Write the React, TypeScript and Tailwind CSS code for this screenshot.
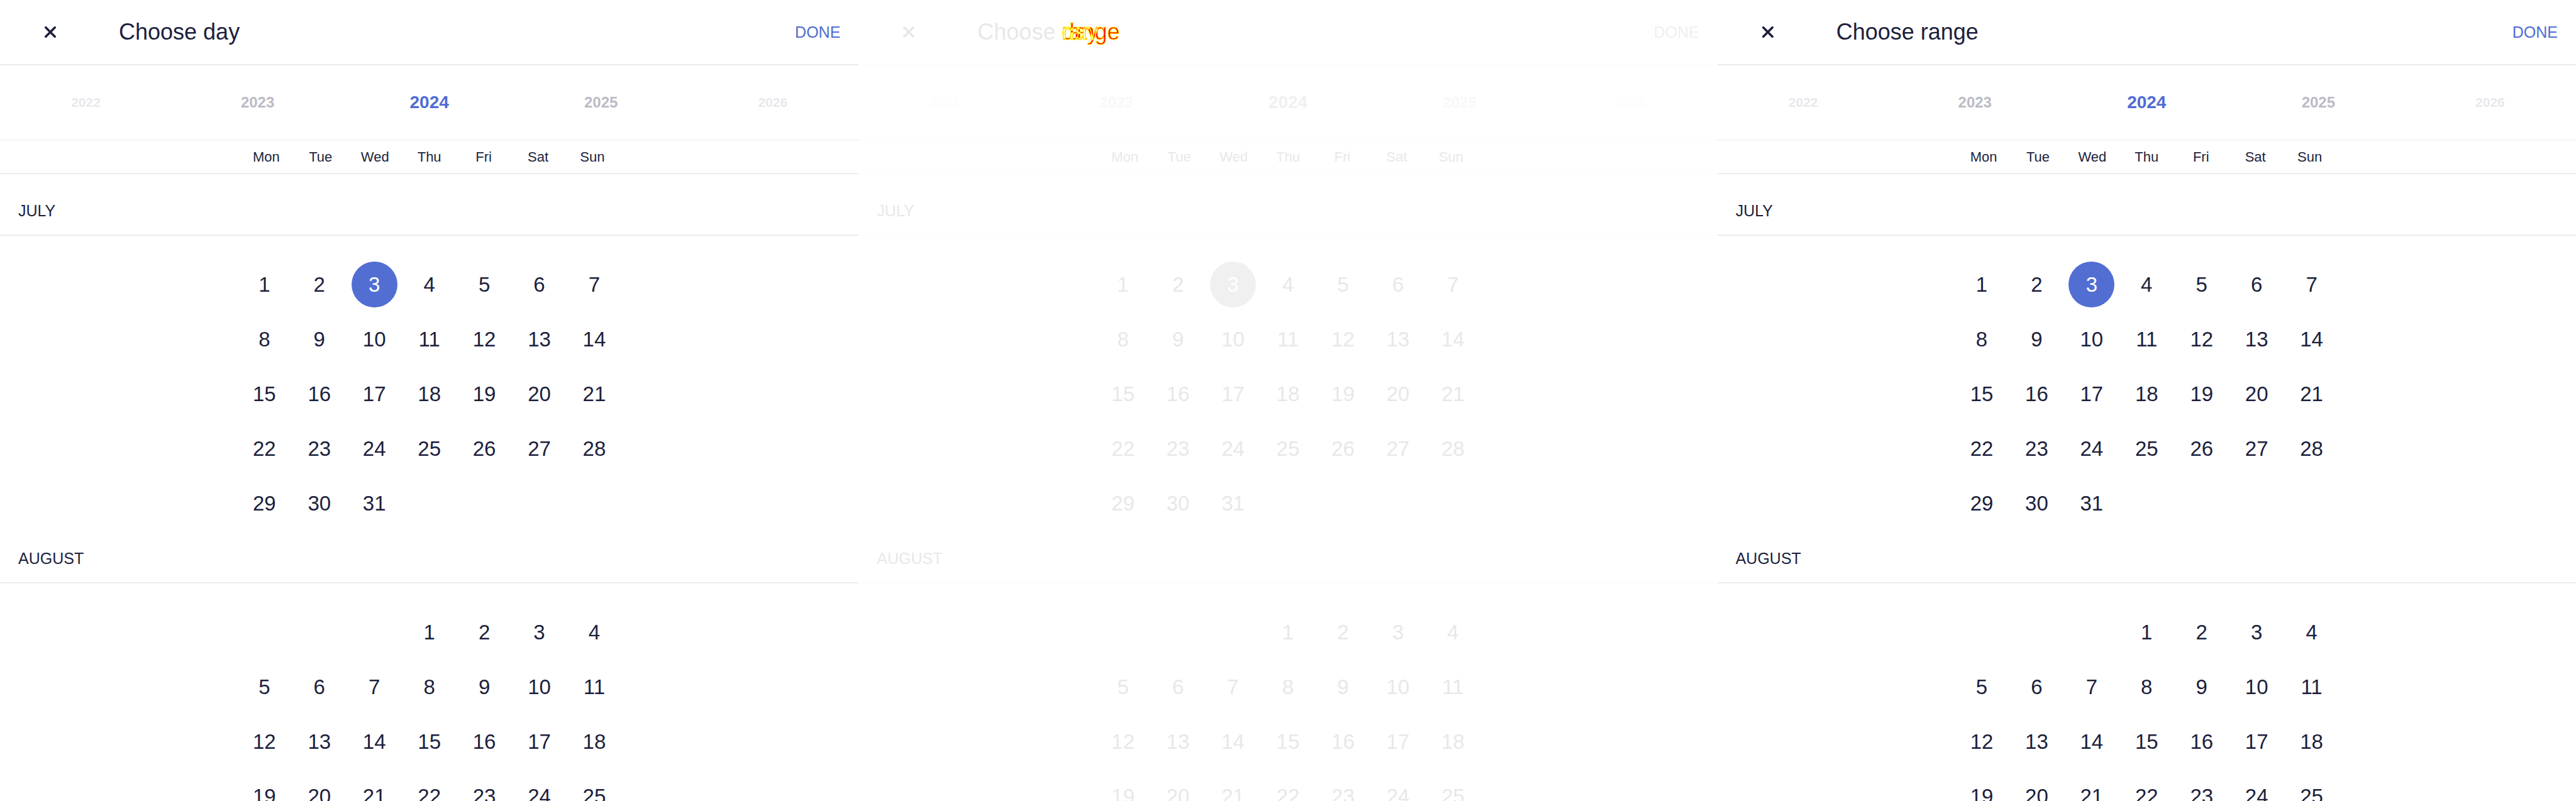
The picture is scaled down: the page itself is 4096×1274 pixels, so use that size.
import type { ReactNode } from "react";

const NAMES = ["Mon", "Tue", "Wed", "Thu", "Fri", "Sat", "Sun"];

type Tone = {
  text: string;
  accent: string;
  line: string;
  circle: string;
  years: string[];
};

const NORMAL: Tone = {
  text: "text-[#1c1f3d]",
  accent: "text-[#4f6cd2]",
  line: "border-[#ececec]",
  circle: "bg-[#526ed3]",
  years: ["text-[#e8e8ec]", "text-[#bbbbc5]", "text-[#4f6cd2]", "text-[#bbbbc5]", "text-[#e8e8ec]"],
};

const FADED: Tone = {
  text: "text-[#e8e8e8]",
  accent: "text-[#f0f0f0]",
  line: "border-[#fdfdfd]",
  circle: "bg-[#f0f0f0]",
  years: ["text-[#fdfdfd]", "text-[#f8f8f8]", "text-[#f0f0f0]", "text-[#f8f8f8]", "text-[#fdfdfd]"],
};

const YEAR_SIZES = ["text-[21px]", "text-[24px]", "text-[28px]", "text-[24px]", "text-[21px]"];

function Month({ name, offset, days, selected, tone }: { name: string; offset: number; days: number; selected?: number; tone: Tone }) {
  return (
    <section>
      <h2 className={`flex h-[91px] items-center border-b-2 px-[29px] pt-[13px] text-[25px] leading-8 ${tone.line}`}>{name}</h2>
      <div className="mx-auto grid w-[612px] grid-cols-7 gap-y-[14px] pt-[41px]">
        {Array.from({ length: offset }, (_, i) => (
          <span key={`blank-${i}`} />
        ))}
        {Array.from({ length: days }, (_, i) => i + 1).map((day) => (
          <button
            key={day}
            type="button"
            className={`mx-auto flex size-[73px] items-center justify-center rounded-full text-[33px] leading-none ${day === selected ? `${tone.circle} text-white` : ""}`}
          >
            {day}
          </button>
        ))}
      </div>
    </section>
  );
}

function Calendar({ title, tone, label }: { title: ReactNode; tone: Tone; label: string }) {
  return (
    <section aria-label={label} className={`min-w-0 flex-1 ${tone.text}`}>
      <header className={`flex h-[104px] items-center border-b-2 pr-[29px] pl-[62px] ${tone.line}`}>
        <button type="button" aria-label="Close" className="flex size-9 items-center justify-center">
          <svg viewBox="0 0 20 20" className="size-[18px]" fill="none" stroke="currentColor" strokeWidth="4" strokeLinecap="round">
            <path d="M2 2 18 18M18 2 2 18" />
          </svg>
        </button>
        <h1 className="ml-[91px] flex-1 text-[36px] leading-10">{title}</h1>
        <button type="button" className={`text-[25px] leading-8 ${tone.accent}`}>DONE</button>
      </header>
      <nav aria-label="Year" className={`grid h-[119px] grid-cols-5 items-center border-b font-bold ${tone.line}`}>
        {[2022, 2023, 2024, 2025, 2026].map((year, i) => (
          <button key={year} type="button" className={`${YEAR_SIZES[i]} ${tone.years[i]}`}>{year}</button>
        ))}
      </nav>
      <div className={`h-[54px] border-b-2 ${tone.line}`}>
        <div className="mx-auto grid h-full w-[605px] grid-cols-7 items-center text-center text-[22px]">
          {NAMES.map((n) => (
            <span key={n}>{n}</span>
          ))}
        </div>
      </div>
      <div className="pt-[7px]">
        <Month name="JULY" offset={0} days={31} selected={3} tone={tone} />
        <Month name="AUGUST" offset={3} days={31} tone={tone} />
      </div>
    </section>
  );
}

// Both words share one origin: pixels covered by only one of them turn red,
// pixels covered by both cancel out, and each word keeps a thin yellow edge.
function OverlaidTitle() {
  return (
    <>
      Choose{" "}
      <span className="relative inline-block text-transparent before:absolute before:top-0 before:left-0 before:z-10 before:content-['range'] before:[-webkit-text-stroke:1px_#fff000] after:absolute after:top-0 after:left-0 after:z-10 after:content-['day'] after:[-webkit-text-stroke:1px_#fff000]">
        <span className="relative inline-block bg-black text-[#00ffff] invert">
          <span className="mix-blend-difference">range</span>
          <span className="absolute top-0 left-0 mix-blend-difference">day</span>
        </span>
      </span>
    </>
  );
}

export default function App() {
  return (
    <main className="flex h-screen overflow-hidden bg-white font-['Liberation_Sans',Arial,sans-serif]">
      <Calendar label="Choose day" title="Choose day" tone={NORMAL} />
      <Calendar label="Difference" title={<OverlaidTitle />} tone={FADED} />
      <Calendar label="Choose range" title="Choose range" tone={NORMAL} />
    </main>
  );
}
